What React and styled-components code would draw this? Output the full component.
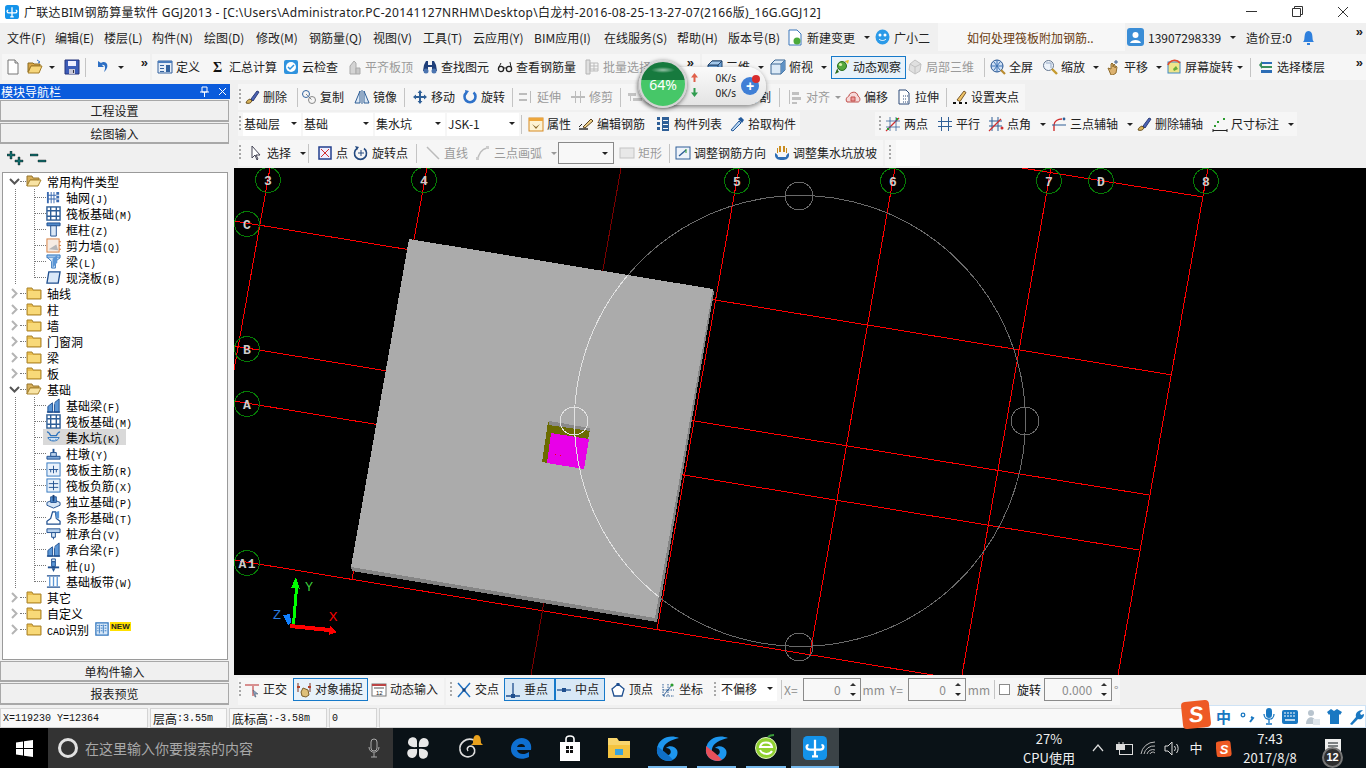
import React from "react";
import styled, { createGlobalStyle } from "styled-components";

const CJK = `"Noto Sans CJK SC", "Noto Sans", sans-serif`;
const MONO = `"Liberation Mono", "Noto Sans CJK SC", monospace`;

const GlobalStyle = createGlobalStyle`
  html, body { margin: 0; padding: 0; background: #f0f0f0; overflow: hidden; }
  * { box-sizing: border-box; }
`;

/* ---------- icons ---------- */
const ICONS = {
  doc: <><path d="M3 1h7l3 3v11H3z" fill="#fff" stroke="#777" /><path d="M10 1v3h3" fill="#ddd" stroke="#777" /></>,
  open: <><path d="M1 4h5l1 1h6v2H4L1 13z" fill="#d8a648" stroke="#8a6a20" /><path d="M4 7h11l-3 7H1z" fill="#f6d67c" stroke="#a37c28" /><path d="M10 1l3 2-2 1" fill="none" stroke="#3b73c4" /></>,
  save: <><path d="M1 1h14v14H1z" fill="#3c5cb8" stroke="#26347a" /><path d="M4 2h8v5H4z" fill="#eef" /><path d="M5 10h6v5H5z" fill="#c8c8d8" /><path d="M9 11h1v3H9z" fill="#334" /></>,
  undo: <path d="M4 2v6h6L8 6c3-1 4 3 2 7 4-3 5-9 0-10-1 0-2 0-3 1z" fill="#2d6fc4" />,
  def: <><path d="M1 2h14v12H1z" fill="#e6eef8" stroke="#34639f" /><path d="M1 2h14v2H1z" fill="#4a7cbc" /><path d="M3 6h4v1H3zM3 9h4v1H3zM3 12h4v1H3zM9 6h4v7H9z" fill="#34639f" /></>,
  sigma: <text x="3" y="13" fontSize="14" fontWeight="700" fill="#111" fontFamily="Liberation Serif">Σ</text>,
  cloud: <><rect x="1" y="1" width="14" height="14" rx="2" fill="#2f93de" /><circle cx="8" cy="8" r="5" fill="#fff" /><path d="M5 8l2 2 4-4" fill="none" stroke="#2f93de" strokeWidth="1.5" /></>,
  flat: <><path d="M4 15V7l4-5 2 2v11z" fill="#d4d4d4" stroke="#aaa" /><path d="M10 9h4v6h-4z" fill="#c8c8c8" stroke="#aaa" /></>,
  binoc: <><path d="M2 6l2-4h2v4h4V2h2l2 4 1 6H10V8H6v4H1z" fill="#1f3f7a" /><circle cx="4" cy="12" r="2.5" fill="#4b74b0" /><circle cx="12" cy="12" r="2.5" fill="#4b74b0" /></>,
  glasses: <><circle cx="4" cy="10" r="2.6" fill="none" stroke="#222" strokeWidth="1.3" /><circle cx="12" cy="10" r="2.6" fill="none" stroke="#222" strokeWidth="1.3" /><path d="M6 9h4M2 8l2-4M14 8l-1-5" stroke="#222" fill="none" /></>,
  batch: <><path d="M2 1h4v14H2z" fill="#e0e0e0" stroke="#b4b4b4" /><path d="M6 4h8v8H6zM6 7h8M6 10h8M10 4v8" fill="none" stroke="#bbb" /></>,
  cube: <><path d="M1 6l4-4h10v9l-4 4H1z" fill="#6ea3d8" stroke="#23466f" /><path d="M1 6h10v9M11 6l4-4" fill="none" stroke="#23466f" /><path d="M1 6l4-4h10l-4 4z" fill="#a4c8ea" stroke="#23466f" /></>,
  topcube: <><path d="M1 5l4-4h10v10l-4 4H1z" fill="#dbe9f6" stroke="#3a6794" /><path d="M1 5h10v10M11 5l4-4" fill="none" stroke="#3a6794" /><path d="M11 5l4-4v10l-4 4z" fill="#5f91c4" /></>,
  orbit: <><path d="M2 14C4 8 9 3 14 2" fill="none" stroke="#777" /><circle cx="8" cy="7" r="4.5" fill="#55a83c" stroke="#2b6d1d" /><circle cx="6.5" cy="5.5" r="1.6" fill="#d8f0a8" /><path d="M11 2l4-1-1 4z" fill="#e7c52d" /><path d="M1 15l2-5 2 3z" fill="#2b6d1d" /></>,
  cubegray: <><path d="M3 5l5-4 6 4-1 7-5 3-6-4z" fill="#e0e0e0" stroke="#c2c2c2" /><path d="M3 5l5 3 6-3M8 8v7" fill="none" stroke="#c2c2c2" /></>,
  globe: <><circle cx="7" cy="7" r="6" fill="#cfe0f4" stroke="#25528e" /><path d="M7 1v12M1 7h12M4 3l6 8M10 3l-6 8" stroke="#3e73b4" fill="none" /><path d="M11 11l4 4" stroke="#b98a2d" strokeWidth="2.2" /></>,
  zoom: <><circle cx="6.5" cy="6.5" r="5" fill="#edf3fa" stroke="#63768f" /><path d="M4 4h5v5" stroke="#93a7c4" fill="none" /><path d="M10 10l5 5" stroke="#c59a2e" strokeWidth="2.4" /></>,
  hand: <><path d="M3 9l3 1V5l1-1 1 1v3l1-3 1 1v3l1-2 1 1-1 6-3 2H6z" fill="#dcb270" stroke="#8f6c2e" /><path d="M11 1v4M9 3h4" stroke="#3f5e8c" /></>,
  rotscreen: <><rect x="2" y="3" width="12" height="11" fill="#efe58b" stroke="#3e88c4" /><path d="M2 6a7 7 0 0 1 12-2" fill="none" stroke="#e24a2d" strokeWidth="1.7" /><path d="M7 10l3-3 2 3-4 2z" fill="#69ad3a" /></>,
  floors: <><path d="M3 3h11v2H3z" fill="#2d6eb6" /><path d="M3 7h11v2H3z" fill="#3a8f5a" /><path d="M3 11h11v3H3z" fill="#2d6eb6" /><path d="M1 6l3-4v8z" fill="#3a8f5a" /></>,

  erase: <><path d="M2 14c1-3 2-3 4-4l2 2c-1 2-3 3-6 2z" fill="#d8b35a" stroke="#6c5425" /><path d="M7 10l6-8 2 1-6 9z" fill="#4b63b5" stroke="#2d3e78" /></>,
  copy: <><circle cx="5" cy="5" r="3.5" fill="none" stroke="#3465a0" /><circle cx="11" cy="11" r="3.5" fill="none" stroke="#888" /><path d="M5 5l6 6" stroke="#555" strokeDasharray="1 1" /></>,
  mirror: <><path d="M1 14L6 2v12zM15 14L10 2v12z" fill="#dde9f5" stroke="#2f5e96" /><path d="M8 1v14" stroke="#2f5e96" /></>,
  move: <path d="M8 1l2.4 3H9v3h3V5.6L15 8l-3 2.4V9H9v3h1.4L8 15l-2.4-3H7V9H4v1.4L1 8l3-2.4V7h3V4H5.6z" fill="#2f5f97" />,
  rotate: <><path d="M11.5 3.5a5.5 5.5 0 1 1-7 0" fill="none" stroke="#2f72c9" strokeWidth="2.6" /><path d="M3 1l4 1-3 4z" fill="#2f72c9" /></>,
  extend: <path d="M1 4h8v2H1zM1 10h8v2H1zM12 2h1v12h-1z" fill="#bcbcbc" />,
  trim: <path d="M1 7h14v2H1zM5 2h1v12H5zM10 2h1v12h-1z" fill="#bcbcbc" />,
  merge: <path d="M1 4h8v3H1zM6 9h9v3H6zM3 7h1v5H3z" fill="#c4c4c4" />,
  alignG: <path d="M2 1h1v14H2zM5 3h7v3H5zM5 8h9v3H5zM5 13h5v2H5z" fill="#c0c0c0" />,
  offset: <><path d="M2 13c-2-3 0-5 2-6 0-4 8-6 9 0 3 2 2 6 0 6z" fill="#f6d8d8" stroke="#c0514d" /><path d="M6 12V8h4v4z" fill="#e99" stroke="#c0514d" /></>,
  stretch: <><path d="M3 1h7l3 3v11H3z" fill="#fff" stroke="#2c4a78" /><path d="M7 7h5M7 10h4M7 13h6" stroke="#2c4a78" strokeDasharray="1 1" /></>,
  grip: <><path d="M5 11l7-9 2 1.5-6 9z" fill="#efc365" stroke="#77572a" /><path d="M1 15h3v-2H1zM7 15h3v-2H7zM13 15h2v-2h-2z" fill="#111" /></>,

  prop: <><rect x="1" y="2" width="14" height="13" fill="#fdf3d4" stroke="#d68a23" /><path d="M1 2h14v3H1z" fill="#eda63c" /><path d="M4 8l4 3 4-3-4 5z" fill="#8a6a2c" /></>,
  editbar: <><path d="M1 13h9" stroke="#222" strokeWidth="1.4" /><path d="M5 11l8-8 2 2-8 7z" fill="#efd089" stroke="#5a4320" /><path d="M1 11l3-3" stroke="#222" /></>,
  list: <path d="M2 1h3v3H2zM2 6h3v3H2zM2 11h3v3H2zM7 1h7v14H7zM8 4h5v1H8zM8 8h5v1H8zM8 12h5v1H8z" fill="#2f5f97" fillRule="evenodd" />,
  picker: <><path d="M2 14l8-9 2 2-8 8z" fill="#b9d5f0" stroke="#235a9c" /><path d="M9 3l3-2 3 3-2 3z" fill="#235a9c" /></>,
  twopts: <><path d="M1 15L14 2" stroke="#d12f2f" strokeWidth="1.3" /><path d="M5 1v14M11 1v14M1 5h14M1 11h14" stroke="#2f5f97" fill="none" opacity=".75" /><path d="M2 12h2v2H2zM11 2h2v2h-2z" fill="#2b9c2f" /></>,
  parallel: <path d="M4 1h1v14H4zM11 1h1v14h-1zM1 5h14v1H1zM1 10h14v1H1z" fill="#2f5f97" />,
  ptangle: <><path d="M4 1v14M10 1v14M1 5h13M1 10h13" stroke="#2f5f97" fill="none" /><path d="M1 15L13 3" stroke="#d12f2f" strokeWidth="1.3" /><circle cx="14" cy="12" r="1.5" fill="#d12f2f" /></>,
  arcaux: <><path d="M3 15V9c0-4 4-6 8-6" fill="none" stroke="#d12f2f" strokeWidth="1.4" /><path d="M1 9h14" stroke="#2f5f97" /><circle cx="13" cy="3" r="1.4" fill="#2f5f97" /></>,
  dim: <><path d="M2 9h2v2H2zM11 2h2v2h-2z" fill="#2b9c2f" /><path d="M1 13v3M15 13v3M1 14.500h14" stroke="#222" fill="none" /><path d="M5 5h2v2H5z" fill="#2b9c2f" /></>,

  pointer: <path d="M4 1v12l3-3 2 5 1-1-2-4h4z" fill="#fff" stroke="#445" />,
  point: <><rect x="2" y="2" width="12" height="12" fill="#eef" stroke="#233f8d" strokeWidth="1.5" /><path d="M4 4l8 8M12 4l-8 8" stroke="#d12f2f" /></>,
  rotpt: <><path d="M11 3.500a6 6 0 1 1-7 0" fill="none" stroke="#244a80" strokeWidth="1.6" /><path d="M2 1l4 1-2 3z" fill="#244a80" /><path d="M8 5v6M5 8h6" stroke="#244a80" /></>,
  lineG: <path d="M2 2l12 12" stroke="#bbb" strokeWidth="1.5" />,
  arcG: <><path d="M3 15c0-6 4-11 9-12" fill="none" stroke="#bbb" strokeWidth="1.5" /><rect x="1" y="12" width="3" height="3" fill="#ccc" /><rect x="11" y="1" width="3" height="3" fill="#ccc" /></>,
  rectG: <rect x="1" y="3" width="14" height="10" fill="#e8e8e8" stroke="#c4c4c4" />,
  rebardir: <><rect x="1" y="2" width="14" height="12" fill="#eef3fa" stroke="#2f5f97" /><path d="M4 11l7-6" stroke="#2f5f97" strokeWidth="1.4" /><path d="M11 4v4" stroke="#2b9c2f" /></>,
  sumpup: <><path d="M5 1h2v6H5zM9 1h2v6H9zM3 3h1v5H3zM12 3h1v5h-1z" fill="#c98c1e" /><path d="M1 8c2 1 3 2 3 4h8c0-2 1-3 3-4v3c-1 3-3 4-7 4s-6-1-7-4z" fill="#2d6eb6" /></>,

  ortho: <><path d="M1 2h14v2H1zM8 4h2v10H8z" fill="#d88f8f" /><path d="M9 8l5 4-3 0 1 3-1 0-1-3z" fill="#8aa6c8" stroke="#456" strokeWidth=".5" /></>,
  snap: <><path d="M2 1v9M14 1v9" stroke="#7a3320" /><path d="M1 4h3v2H1zM12 4h3v2h-3z" fill="#b4402a" /><path d="M5 10l2-4 5 2 1 5-3 2-4-1z" fill="#dfc079" stroke="#7a5e2a" /></>,
  dynin: <><rect x="1" y="2" width="14" height="12" fill="#fff" stroke="#777" /><path d="M1 2h14v2H1z" fill="#b44" /><path d="M3 6h10" stroke="#555" /><text x="5" y="13" fontSize="6" fill="#222" fontFamily="Liberation Sans">12</text></>,
  cross: <><path d="M2 1l12 14M14 1L2 15" stroke="#1f6fbf" strokeWidth="1.5" /><rect x="6.500" y="6.500" width="3" height="3" fill="#17407a" /></>,
  perp: <><path d="M8 1v13M1 14h14" stroke="#1f4f8f" strokeWidth="1.3" /><rect x="6" y="12" width="4" height="4" fill="#1f4f8f" /></>,
  mid: <><path d="M1 8h14" stroke="#1f4f8f" strokeWidth="1.3" /><rect x="6" y="6" width="4" height="4" fill="#1f4f8f" /></>,
  vertex: <><path d="M8 2l6 5-2 7H4L2 7z" fill="#fff" stroke="#1f4f8f" strokeWidth="1.3" /><rect x="6.500" y="1" width="3" height="3" fill="#1f4f8f" /></>,
  coord: <><path d="M3 2v12h11M3 8h11M8 2v12" stroke="#2f5f97" strokeDasharray="1.500 1" fill="none" /><path d="M3 14L12 3" stroke="#2f5f97" /><circle cx="12" cy="3" r="1.600" fill="#2b9c2f" /></>,

  folderOpen: <><path d="M1 3h5l1 2h6v2H4l-3 6z" fill="#d8b05a" stroke="#96742c" /><path d="M4 7h11l-3 6H1z" fill="#f8e3a3" stroke="#a9842f" /></>,
  folder: <><path d="M1 3h5l1 2h8v9H1z" fill="#e9bd4d" stroke="#a9842f" /><path d="M2 6h12v7H2z" fill="#f8d978" /></>,
  grid: <path d="M1 2h2v12H1zM5 2h1v12H5zM8 2h1v12H8zM11 2h3v3h-3zM11 6h3v3h-3zM11 10h3v3h-3zM1 5h10v1H1zM1 9h10v1H1z" fill="#3a6ab0" />,
  raft: <><rect x="1" y="1" width="14" height="14" fill="#fff" stroke="#2f5f97" strokeWidth="1.5" /><path d="M1 5h14M1 11h14M5 1v14M11 1v14" stroke="#2f5f97" strokeWidth="1.5" /></>,
  col: <><path d="M1 1h14v3H1z" fill="#4f89c9" stroke="#1f4f8f" /><path d="M5 4h6v11H5z" fill="#dce9f7" stroke="#1f4f8f" /></>,
  wall: <><rect x="1" y="1" width="13" height="14" fill="#f6ece4" stroke="#d57c3c" /><path d="M3 12l8-5 2 6z" fill="#9aa0a6" opacity=".7" /><path d="M14 4h2M14 8h2M14 12h2" stroke="#d57c3c" /></>,
  beam: <><path d="M1 1h14v3H1z" fill="#9cc2ea" stroke="#2f74bd" /><path d="M2 4l4 4v7h4V8l5-4" fill="#d8e8f8" stroke="#2f74bd" /><path d="M7 5l5-4v8l-5 6z" fill="#5b96d6" /></>,
  slab: <path d="M3 2h12l-2 12H1z" fill="#dbe9f8" stroke="#1f4f8f" strokeWidth="1.4" />,
  beamF: <><path d="M2 15V9l5-4v10zM9 15V5l5-4v14z" fill="#5b96d6" stroke="#1f4f8f" /><path d="M1 15h14" stroke="#1f4f8f" strokeWidth="1.5" /><path d="M7 5l2-2v4z" fill="#fff" /></>,
  sump: <><path d="M1 2c2 0 3 2 4 4h6c1-2 2-4 4-4" fill="none" stroke="#2f74bd" strokeWidth="1.4" /><path d="M2 8c1 5 11 5 12 0z" fill="#d0e3f6" stroke="#2f74bd" /><path d="M4 10h1M7 11h1M10 10h1" stroke="#2f74bd" /></>,
  pier: <><path d="M1 11h14v3H1z" fill="#7ea7d6" stroke="#1f4f8f" /><path d="M5 7h6v4H5z" fill="#bcd3ec" stroke="#1f4f8f" /><path d="M7 3h2v4H7z" fill="#1f4f8f" /></>,
  raftMain: <><rect x="1" y="1" width="14" height="14" fill="#e8f1fb" stroke="#2f74bd" /><path d="M3 8h10M8 4v8M5 11V8M11 11V8" stroke="#1f4f8f" fill="none" /></>,
  raftNeg: <><rect x="1" y="1" width="14" height="14" fill="#e8f1fb" stroke="#2f74bd" /><path d="M3 6h10M3 10h10M8 3v10" stroke="#1f4f8f" fill="none" /></>,
  iso: <><path d="M1 9l7-3 7 3v3l-7 3-7-3z" fill="#d7e6f6" stroke="#1f4f8f" /><path d="M5 3h6v6H5z" fill="#5b96d6" stroke="#1f4f8f" /><path d="M7 1h2v7H7z" fill="#173f75" /></>,
  strip: <><path d="M1 15V12l4-3 2-7h3l1 7 4 3v3z" fill="#fff" stroke="#1f4f8f" strokeWidth="1.3" /><path d="M10 2l4-1v8l-3 0z" fill="#5b96d6" /></>,
  cap: <><path d="M1 3h14v4H1z" fill="#b8d2ee" stroke="#1f4f8f" /><path d="M6 7h4v5H6z" fill="#d8e8f8" stroke="#1f4f8f" /><path d="M7 12h2l-1 3z" fill="#1f4f8f" /></>,
  pile: <><path d="M6 1h4v3H6z" fill="#d8e8f8" stroke="#1f4f8f" /><path d="M6 4h4v5H6z" fill="#5b96d6" stroke="#1f4f8f" /><path d="M2 9h12v2H2z" fill="#1f4f8f" /><path d="M6 11h4l-2 4z" fill="#1f4f8f" /></>,
  band: <><path d="M1 2h14M1 14h14" stroke="#1f4f8f" strokeWidth="1.3" /><path d="M4 3v10M8 3v10M12 3v10" stroke="#5b96d6" strokeWidth="1.4" /></>,
  cadbook: <><rect x="1" y="1" width="14" height="14" fill="#d6e7f8" stroke="#2f74bd" strokeWidth="1.4" /><path d="M5 3v10M9.500 3v10" stroke="#2f74bd" /><path d="M2.500 4h1.500M2.500 7h1.500M2.500 10h1.500M6.500 4h2M6.500 7h2M6.500 10h2M11 4h2M11 7h2M11 10h2" stroke="#2f74bd" /></>,
};

const IconSvg = styled.svg`
  flex: none;
  display: block;
`;
const Ico = ({ n, s = 16 }) => (
  <IconSvg width={s} height={s} viewBox="0 0 16 16">
    {ICONS[n]}
  </IconSvg>
);

/* ---------- top bars ---------- */
const Shell = styled.div`
  position: relative;
  width: 1366px;
  height: 768px;
  display: flex;
  flex-direction: column;
  overflow: hidden;
  background: #f0f0f0;
  color: #111;
  font: 12px ${CJK};
`;
const TitleBar = styled.div`
  height: 23px;
  flex: none;
  display: flex;
  align-items: center;
  padding-left: 5px;
  background: #fff;
  font-size: 12px;
  color: #222;
`;
const TitleText = styled.span`
  margin-left: 5px;
  white-space: nowrap;
  font-family: "Noto Sans", "Noto Sans CJK SC", sans-serif;
  letter-spacing: 0.3px;
`;
const WinButtons = styled.div`
  margin-left: auto;
  display: flex;
`;
const WinBtn = styled.div`
  width: 46px;
  height: 23px;
  display: flex;
  align-items: center;
  justify-content: center;
`;
const MenuBar = styled.div`
  height: 31px;
  flex: none;
  display: flex;
  align-items: center;
  padding: 0 0 3px 7px;
  white-space: nowrap;
  color: #222;
`;
const MenuItem = styled.div`
  width: ${(p) => p.$w}px;
  flex: none;
  display: flex;
  align-items: center;
  gap: ${(p) => p.$gap ?? 4}px;
`;
const NewsBox = styled.div`
  width: 187px;
  height: 28px;
  flex: none;
  margin: 0 2px 0 0;
  padding-left: 29px;
  display: flex;
  align-items: center;
  background: #f7f7f7;
  color: #6b3d12;
`;
const Caret = styled.i`
  flex: none;
  display: block;
  width: 0;
  height: 0;
  margin-left: ${(p) => p.$ml ?? 5}px;
  border-left: 3px solid transparent;
  border-right: 3px solid transparent;
  border-top: 3px solid ${(p) => (p.$muted ? "#999" : "#222")};
`;
const Chevrons = styled.span`
  margin-left: auto;
  margin-right: ${(p) => p.$mr ?? 2}px;
  align-self: flex-start;
  margin-top: 2px;
  font: 700 13px/14px "Liberation Sans", sans-serif;
  color: #222;
`;
const ToolRow = styled.div`
  flex: none;
  height: ${(p) => p.$h}px;
  margin-top: ${(p) => p.$mt ?? 0}px;
  margin-bottom: ${(p) => p.$mb ?? 0}px;
  display: flex;
  white-space: nowrap;
`;
const Group = styled.div`
  flex: none;
  display: flex;
  align-items: center;
  width: ${(p) => p.$w}px;
  margin-left: ${(p) => p.$ml ?? 0}px;
  padding-left: ${(p) => p.$pl ?? 0}px;
  padding-bottom: ${(p) => p.$pb ?? 0}px;
  background: #f6f6f6;
`;
const Handle = styled.span`
  flex: none;
  align-self: stretch;
  width: ${(p) => p.$w ?? 6}px;
  background: repeating-linear-gradient(#a8a8a8 0 2px, transparent 2px 4px)
    ${(p) => p.$x ?? 1}px center / 2px 16px no-repeat;
`;
const Sep = styled.span`
  flex: none;
  width: ${(p) => p.$w}px;
  height: 19px;
  background: linear-gradient(#c4c4c4, #c4c4c4) left center / 1px 100% no-repeat;
`;
const ToolItem = styled.div`
  flex: none;
  width: ${(p) => p.$w}px;
  height: ${(p) => (p.$active ? "23px" : "auto")};
  display: flex;
  align-items: center;
  gap: 3px;
  padding-left: ${(p) => p.$pad ?? 0}px;
  color: ${(p) => (p.$muted ? "#9a9a9a" : "#222")};
  ${(p) =>
    p.$active &&
    `border: 1px solid #1679c9; background: ${p.$active === "strong" ? "#d8e8f6" : "#e8f2fa"}; padding-left: ${(p.$pad ?? 3) - 1}px;`}
`;
const ToolLabel = styled.span`
  margin-bottom: 2px;
`;
const Tool = ({ item }) => {
  if (item.sep) return <Sep $w={item.sep} />;
  return (
    <ToolItem $w={item.w} $pad={item.pad} $muted={item.muted} $active={item.active}>
      {item.i && <Ico n={item.i} />}
      {item.t && <ToolLabel>{item.t}</ToolLabel>}
      {item.caret && <Caret $muted={item.muted} $ml={item.ml} />}
    </ToolItem>
  );
};
const Tools = ({ list }) => list.map((item, k) => <Tool key={k} item={item} />);

const SelectBox = styled.div`
  flex: none;
  width: ${(p) => p.$w}px;
  height: 23px;
  margin-right: ${(p) => p.$mr ?? 2}px;
  padding: 0 4px 2px 1px;
  display: flex;
  align-items: center;
  justify-content: space-between;
  background: #fff;
  color: #222;
`;
const ComboBox = styled.div`
  flex: none;
  width: 56px;
  height: 22px;
  margin-right: 5px;
  padding-right: 5px;
  display: flex;
  align-items: center;
  justify-content: flex-end;
  background: #f8f8f8;
  border: 1px solid #8a8a8a;
`;
const BlankTab = styled.div`
  flex: none;
  width: 24px;
  height: 26px;
  margin-left: 4px;
  background: #fbfbfb;
`;

/* ---------- floating speed widget ---------- */
const Widget = styled.div`
  position: absolute;
  left: 638px;
  top: 67px;
  width: 128px;
  height: 38px;
  border-radius: 19px;
  background: linear-gradient(#fafafa, #e4e4e4);
  box-shadow: 0 2px 5px rgba(0, 0, 0, 0.45);
`;
const Ball = styled.div`
  position: absolute;
  left: 1px;
  top: -7px;
  width: 48px;
  height: 48px;
  border-radius: 50%;
  display: flex;
  align-items: center;
  justify-content: center;
  border: 2px solid #d4d4d4;
  background: radial-gradient(ellipse 12px 3px at 50% 8px, rgba(255, 255, 255, 0.55), transparent),
    linear-gradient(#177a3e 0 42%, #46c768 42% 100%);
  box-shadow: 0 1px 4px rgba(0, 0, 0, 0.55);
  color: #fff;
  font: 14px "Noto Sans", sans-serif;
`;
const Speed = styled.div`
  position: absolute;
  right: 30px;
  top: ${(p) => p.$top}px;
  font: 10px/12px "Noto Sans", sans-serif;
  color: #222;
`;
const SpeedArrow = styled.svg`
  position: absolute;
  left: 53px;
  top: ${(p) => p.$top}px;
`;
const PlusDot = styled.div`
  position: absolute;
  left: 103px;
  top: 10px;
  width: 18px;
  height: 18px;
  border-radius: 50%;
  background: #3f7fd6;
  color: #fff;
  font: 700 14px/18px "Liberation Sans", sans-serif;
  text-align: center;
`;
const RedDot = styled.div`
  position: absolute;
  left: 114px;
  top: 8px;
  width: 8px;
  height: 8px;
  border-radius: 50%;
  background: #d92c2c;
`;

/* ---------- left panel ---------- */
const Main = styled.div`
  flex: none;
  height: 626px;
  display: flex;
`;
const Sidebar = styled.div`
  flex: none;
  width: 234px;
  padding-top: 2px;
  display: flex;
  flex-direction: column;
`;
const PanelHead = styled.div`
  width: 230px;
  height: 15px;
  flex: none;
  display: flex;
  align-items: center;
  padding: 0 3px 0 1px;
  background: #0a5bdc;
  color: #fff;
`;
const PanelBtn = styled.div`
  width: 229px;
  height: ${(p) => p.$h}px;
  flex: none;
  margin-top: 1px;
  display: flex;
  align-items: center;
  justify-content: center;
  background: #f0f0f0;
  border: 1px solid #a8a8a8;
  border-bottom-width: 2px;
  color: #222;
`;
const ExpandStrip = styled.div`
  width: 229px;
  height: 28px;
  flex: none;
  display: flex;
  align-items: center;
  gap: 6px;
  padding-left: 7px;
`;
const TreeBox = styled.div`
  width: 226px;
  height: 488px;
  flex: none;
  margin-left: 2px;
  background: #fff;
  border: 1px solid #9a9a9a;
  font-size: 12px;
  color: #000;
`;
const dots = "repeating-linear-gradient(#777 0 1px, transparent 1px 2px)";
const TreeRow = styled.div`
  height: 16px;
  display: flex;
  align-items: center;
  white-space: nowrap;
  padding-left: ${(p) => (p.$child ? 31 : 6)}px;
  ${(p) =>
    p.$child &&
    `background: ${dots} 12px 0 / 1px 100% no-repeat, ${dots} 31px 0 / 1px ${p.$last ? "9px" : "100%"} no-repeat;`}
`;
const Twist = styled.svg`
  flex: none;
  width: 11px;
  height: 11px;
`;
const Dotted = styled.span`
  flex: none;
  width: ${(p) => p.$w}px;
  height: 0;
  border-top: 1px dotted #777;
`;
const Folder = styled.span`
  flex: none;
  margin-right: 5px;
`;
const CadMark = styled.span`
  flex: none;
  margin-left: 6px;
`;
const Leaf = styled.span`
  display: flex;
  align-items: center;
  gap: 5px;
  height: 16px;
  ${(p) => p.$sel && "margin-left: -3px; padding: 0 6px 0 3px; background: #d9d9d9;"}
`;
const Hot = styled.span`
  font: 10px ${MONO};
`;
const NewTag = styled.span`
  margin: -6px 0 0 1px;
  padding: 0 1px;
  background: #ffe000;
  font: 700 8px/9px "Liberation Sans", sans-serif;
  color: #222;
`;

const ROOT_A = ["轴线", "柱", "墙", "门窗洞", "梁", "板"];
const COMMON = [
  ["grid", "轴网", "(J)"], ["raft", "筏板基础", "(M)"], ["col", "框柱", "(Z)"],
  ["wall", "剪力墙", "(Q)"], ["beam", "梁", "(L)"], ["slab", "现浇板", "(B)"],
];
const BASE = [
  ["beamF", "基础梁", "(F)"], ["raft", "筏板基础", "(M)"], ["sump", "集水坑", "(K)", true],
  ["pier", "柱墩", "(Y)"], ["raftMain", "筏板主筋", "(R)"], ["raftNeg", "筏板负筋", "(X)"],
  ["iso", "独立基础", "(P)"], ["strip", "条形基础", "(T)"], ["cap", "桩承台", "(V)"],
  ["beamF", "承台梁", "(F)"], ["pile", "桩", "(U)"], ["band", "基础板带", "(W)"],
];

const Node = ({ open, label, children }) => (
  <TreeRow>
    <Twist viewBox="0 0 11 11">
      {open ? (
        <path d="M1 3l4.500 4.500L10 3" fill="none" stroke="#555" strokeWidth="2" />
      ) : (
        <path d="M3 1l4.500 4.500L3 10" fill="none" stroke="#b4b4b4" strokeWidth="2" />
      )}
    </Twist>
    <Dotted $w={6} />
    <Folder>
      <Ico n={open ? "folderOpen" : "folder"} />
    </Folder>
    <span>{label}</span>
    {children}
  </TreeRow>
);
const Leaves = ({ list }) =>
  list.map(([icon, name, key, sel], k) => (
    <TreeRow key={name + k} $child $last={k === list.length - 1}>
      <Dotted $w={12} />
      <Leaf $sel={sel}>
        <Ico n={icon} s={15} />
        <span>
          {name}
          <Hot>{key}</Hot>
        </span>
      </Leaf>
    </TreeRow>
  ));

/* ---------- drawing area ---------- */
const Workspace = styled.div`
  flex: none;
  width: 1132px;
  padding-top: 2px;
  display: flex;
  flex-direction: column;
`;
const CanvasWrap = styled.div`
  flex: none;
  height: 507px;
  margin-top: 2px;
  background: #000;
`;
const CanvasSvg = styled.svg`
  display: block;
  shape-rendering: crispEdges;
`;
const RED_LINES = [
  [270, 168, 234, 370], [427, 168, 352, 580], [739, 168, 657, 630], [895, 168, 810, 654],
  [1051, 168, 962, 675], [1208, 168, 1118, 675], [1022, 168, 1203, 197],
  [234, 221, 1172, 375], [234, 346, 1149, 495], [234, 401, 1139, 550], [234, 560, 933, 675],
];
const BUBBLES = [
  ["3", 268, 180], ["4", 424, 180], ["5", 737, 181], ["6", 893, 181], ["7", 1049, 181],
  ["D", 1101, 181], ["8", 1206, 181], ["C", 247, 224], ["B", 247, 349], ["A", 247, 404], ["A1", 247, 563],
];
const SMALL = [[799, 196], [1025, 421], [799, 647]];
const PLATE = "409,239 713,289 655,618 351,567";

const Drawing = () => (
  <CanvasSvg width="1132" height="507" viewBox="234 168 1132 507">
    {RED_LINES.map(([a, b, c, d], k) => (
      <line key={k} x1={a} y1={b} x2={c} y2={d} stroke="#ff0000" />
    ))}
    <line x1="621" y1="168" x2="531" y2="675" stroke="#7a0000" />
    <polygon points="713,289 714,292 657,622 352,571 351,567 655,618" fill="#858585" />
    <polygon points={PLATE} fill="#ababab" />
    <polygon points="548,422 590,429 583,468 542,462" fill="#6b6b00" />
    <polygon points="549,421 590,428 590,431 549,425" fill="#8a8a8a" />
    <polygon points="551,433 589,439 584,469 547,463" fill="#e800e8" />
    <rect x="555" y="454" width="1" height="1" fill="#ff0000" />
    <rect x="560" y="455" width="1" height="1" fill="#ff0000" />
    <g fill="none" stroke="#6a6a6a">
      <path d="M628 275A225.500 225.500 0 1 1 659 597" />
      {SMALL.map(([x, y]) => (
        <circle key={x + "-" + y} cx={x} cy={y} r="14" />
      ))}
    </g>
    <g fill="none" stroke="#e2e2e2">
      <path d="M628 275A225.500 225.500 0 0 0 659 597" />
      <circle cx="574" cy="421" r="14" />
    </g>
    {BUBBLES.map(([t, x, y]) => (
      <g key={t}>
        <circle cx={x} cy={y} r="12.500" fill="none" stroke="#067a06" />
        <text x={x} y={y + 5} textAnchor="middle" fontSize="13" fontWeight="700" fill="#cccccc" fontFamily="Liberation Mono" textLength={t.length > 1 ? 17 : undefined}>
          {t}
        </text>
      </g>
    ))}
    <polygon points="292,624 295,588 291,588 296,577 300,589 298,588 295,624" fill="#00ff00" />
    <polygon points="290,624 330,628 330,626 337,632 329,635 329,632 290,628" fill="#ff0000" />
    <polygon points="283,615 290,614 291,622 288,625" fill="#1080ff" />
    <text x="309" y="591" textAnchor="middle" fontSize="12" fill="#3fd63f" fontFamily="Liberation Sans">Y</text>
    <text x="333" y="621" textAnchor="middle" fontSize="13" fill="#ff0000" fontFamily="Liberation Sans">X</text>
    <text x="277" y="619" textAnchor="middle" fontSize="13" fill="#2a7be0" fontFamily="Liberation Sans">Z</text>
  </CanvasSvg>
);

const MutedText = styled.span`
  flex: none;
  color: #8c8c8c;
  margin: ${(p) => p.$m ?? "0"};
`;
const SpinField = styled.div`
  flex: none;
  width: ${(p) => p.$w}px;
  height: 23px;
  margin-left: ${(p) => p.$ml ?? 0}px;
  display: flex;
  align-items: center;
  justify-content: flex-end;
  gap: 9px;
  padding-right: 4px;
  background: #f8f8f8;
  border: 1px solid #8a8a8a;
  color: #8c8c8c;
`;
const SpinArrows = styled.span`
  flex: none;
  display: flex;
  flex-direction: column;
  gap: 7px;
`;
const UpCaret = styled(Caret)`
  margin: 0;
  border-top: 0;
  border-bottom: 3px solid #333;
`;
const Spin = ({ w, v, ml }) => (
  <SpinField $w={w} $ml={ml}>
    {v}
    <SpinArrows>
      <UpCaret />
      <Caret $ml={0} />
    </SpinArrows>
  </SpinField>
);
const CheckBox = styled.span`
  flex: none;
  width: 11px;
  height: 11px;
  margin: 0 7px 0 4px;
  background: #fff;
  border: 1px solid #8a8a8a;
`;

/* ---------- status + task bar ---------- */
const StatusBar = styled.div`
  flex: none;
  height: 20px;
  display: flex;
  gap: 2px;
  font: 10px ${MONO};
  color: #111;
`;
const Cell = styled.div`
  flex: ${(p) => (p.$w ? `0 0 ${p.$w}px` : "1 1 auto")};
  display: flex;
  align-items: center;
  gap: 0;
  padding-left: 2px;
  white-space: nowrap;
  background: #f8f8f8;
  border: 1px solid #d4d4d4;
`;
const CellHan = styled.span`
  font: 12px ${CJK};
`;
const ImeTab = styled.div`
  position: absolute;
  left: 1182px;
  top: 701px;
  width: 28px;
  height: 27px;
  z-index: 2;
  display: flex;
  align-items: center;
  justify-content: center;
  border-radius: 4px;
  transform: rotate(-6deg);
  background: #ee5a24;
  color: #fff;
  font: italic 700 22px/1 "Liberation Sans", sans-serif;
`;
const ImeBar = styled.div`
  position: absolute;
  left: 1205px;
  top: 705px;
  width: 161px;
  height: 23px;
  display: flex;
  align-items: center;
  padding-left: 10px;
  gap: 7px;
  background: #fff;
  border: 1px solid #cfe3f5;
  color: #1a78c2;
`;
const ImeHan = styled.span`
  font: 700 15px ${CJK};
`;
const Taskbar = styled.div`
  flex: none;
  height: 40px;
  display: flex;
  background: #0a1217;
  color: #fff;
`;
const StartBtn = styled.div`
  flex: none;
  width: 48px;
  display: flex;
  align-items: center;
  justify-content: center;
  background: #000;
`;
const SearchBox = styled.div`
  flex: none;
  width: 345px;
  display: flex;
  align-items: center;
  padding-left: 10px;
  background: #333;
  color: #a8a8a8;
  font-size: 14px;
`;
const CortanaRing = styled.span`
  flex: none;
  width: 20px;
  height: 20px;
  margin-right: 7px;
  border: 3px solid #e0e0e0;
  border-radius: 50%;
`;
const MicSvg = styled.svg`
  margin-left: auto;
  margin-right: 13px;
`;
const TaskSlot = styled.div`
  position: relative;
  flex: none;
  width: ${(p) => p.$w}px;
  display: flex;
  align-items: center;
  justify-content: center;
  ${(p) => p.$current && "background: #3b4347;"}
  ${(p) =>
    p.$open &&
    `&::after { content: ""; position: absolute; left: ${p.$current ? 0 : 5}px; right: ${p.$current ? 0 : 5}px; bottom: 0; height: 2px; background: #76b9ed; }`}
`;
const Tray = styled.div`
  margin-left: auto;
  display: flex;
`;
const TraySlot = styled.div`
  flex: none;
  width: ${(p) => p.$w}px;
  display: flex;
  flex-direction: column;
  align-items: center;
  justify-content: center;
  gap: 1px;
  font: 13px/18px ${CJK};
  color: #f0f0f0;
`;
const Badge = styled.span`
  position: absolute;
  left: 22px;
  top: 19px;
  width: 21px;
  height: 21px;
  border-radius: 50%;
  background: #2e2e2e;
  border: 2px solid #777;
  font: 700 11px/17px "Liberation Sans", sans-serif;
  text-align: center;
`;
const NotifySlot = styled.div`
  position: relative;
  flex: none;
  width: 66px;
`;
const NotifyIcon = styled.svg`
  position: absolute;
  left: 25px;
  top: 11px;
`;
const PinSvg = styled.svg`
  margin-left: auto;
`;
const CloseSvg = styled.svg`
  margin-left: 9px;
`;

/* ---------- tool data ---------- */
const ROW1_A = [
  { i: "doc", w: 22 }, { i: "open", w: 37, caret: 1, ml: 3 }, { i: "save", w: 21 }, { sep: 9 },
  { i: "undo", w: 46, caret: 1 },
];
const ROW1_B = [
  { i: "def", t: "定义", w: 53 }, { i: "sigma", t: "汇总计算", w: 73 }, { i: "cloud", t: "云检查", w: 63 },
  { i: "flat", t: "平齐板顶", w: 76, muted: 1 }, { i: "binoc", t: "查找图元", w: 75 },
  { i: "glasses", t: "查看钢筋量", w: 87 }, { i: "batch", t: "批量选择", w: 76, muted: 1 },
];
const ROW1_C = [
  { i: "cube", t: "三维", w: 63, caret: 1 }, { i: "topcube", t: "俯视", w: 61, caret: 1 },
  { i: "orbit", t: "动态观察", w: 75, active: 1, pad: 3 }, { i: "cubegray", t: "局部三维", w: 78, pad: 1, muted: 1 },
  { sep: 6 }, { i: "globe", t: "全屏", w: 52 }, { i: "zoom", t: "缩放", w: 63, caret: 1 },
  { i: "hand", t: "平移", w: 61, caret: 1 }, { i: "rotscreen", t: "屏幕旋转", w: 84, caret: 1, ml: 1 },
  { sep: 8 }, { i: "floors", t: "选择楼层", w: 90 },
];
const ROW2 = [
  { i: "erase", t: "删除", w: 53 }, { sep: 4 }, { i: "copy", t: "复制", w: 53 }, { i: "mirror", t: "镜像", w: 50 },
  { sep: 8 }, { i: "move", t: "移动", w: 50 }, { i: "rotate", t: "旋转", w: 50 }, { sep: 6 },
  { i: "extend", t: "延伸", w: 52, muted: 1 }, { i: "trim", t: "修剪", w: 50, muted: 1 }, { sep: 7 },
  { i: "merge", t: "合并", w: 50, muted: 1 }, { i: "merge", t: "打断", w: 51 }, { i: "trim", t: "分割", w: 51 },
  { sep: 8 }, { i: "alignG", t: "对齐", w: 58, caret: 1, muted: 1, ml: 2 }, { i: "offset", t: "偏移", w: 51 },
  { i: "stretch", t: "拉伸", w: 50 }, { sep: 6 }, { i: "grip", t: "设置夹点", w: 73 },
];
const ROW3_A = [
  { i: "prop", t: "属性", w: 50 }, { i: "editbar", t: "编辑钢筋", w: 77 }, { i: "list", t: "构件列表", w: 74 },
  { i: "picker", t: "拾取构件", w: 71 },
];
const ROW3_B = [
  { i: "twopts", t: "两点", w: 52 }, { i: "parallel", t: "平行", w: 51 }, { i: "ptangle", t: "点角", w: 63, caret: 1, ml: 6 },
  { i: "arcaux", t: "三点辅轴", w: 85, caret: 1, ml: 6 }, { i: "erase", t: "删除辅轴", w: 76 },
  { i: "dim", t: "尺寸标注", w: 85, caret: 1, ml: 6 },
];
const ROW4_A = [
  { i: "pointer", t: "选择", w: 60, caret: 1, ml: 6 }, { sep: 9 }, { i: "point", t: "点", w: 36 }, { i: "rotpt", t: "旋转点", w: 63 },
  { sep: 9 }, { i: "lineG", t: "直线", w: 50, muted: 1 }, { i: "arcG", t: "三点画弧", w: 83, caret: 1, muted: 1, ml: 6 },
];
const ROW4_B = [
  { i: "rectG", t: "矩形", w: 50, muted: 1 }, { sep: 6 }, { i: "rebardir", t: "调整钢筋方向", w: 99 },
  { i: "sumpup", t: "调整集水坑放坡", w: 109 },
];
const SNAP_A = [
  { i: "ortho", t: "正交", w: 49 }, { i: "snap", t: "对象捕捉", w: 75, active: 1, pad: 3 }, { i: "dynin", t: "动态输入", w: 73, pad: 3 },
];
const SNAP_B = [
  { i: "cross", t: "交点", w: 48 }, { i: "perp", t: "垂点", w: 51, active: "strong", pad: 1 }, { i: "mid", t: "中点", w: 50, active: "strong", pad: 1 },
  { i: "vertex", t: "顶点", w: 55, pad: 5 }, { i: "coord", t: "坐标", w: 51 },
];
const MENUS = [
  ["文件(F)", 48], ["编辑(E)", 49], ["楼层(L)", 48], ["构件(N)", 52], ["绘图(D)", 52], ["修改(M)", 53],
  ["钢筋量(Q)", 64], ["视图(V)", 50], ["工具(T)", 50], ["云应用(Y)", 61], ["BIM应用(I)", 70], ["在线服务(S)", 73],
  ["帮助(H)", 51], ["版本号(B)", 60],
];

const AppLogo = ({ s = 14 }) => (
  <svg width={s} height={s} viewBox="0 0 16 16">
    <rect width="16" height="16" rx="3" fill="#1493ea" />
    <path d="M8 2.500v11M8 9H4.500c-2.500 0-2.800-3-.8-3M8 9h3.500c2.500 0 2.800-3 .8-3M6 13.500h4" fill="none" stroke="#fff" strokeWidth="1.500" />
  </svg>
);
const SwooshG = ({ red }) => (
  <svg width="26" height="27" viewBox="0 0 26 27">
    <path d="M24 3C15-1 3 3 2 14c-1 7 5 12 12 12 6-1 10-6 8-11-2-4-8-5-11-2 4 0 6 3 4 6-3 3-8 0-7-5 1-6 8-9 16-11z" fill="#1d96ee" />
    <path d="M2 14c-1 7 5 12 12 12 2 0 3-1 4-1-3-4-8-8-16-14z" fill={red ? "#e8505a" : "#0f6fc8"} />
  </svg>
);

export default function App() {
  return (
    <Shell>
      <GlobalStyle />
      <TitleBar>
        <AppLogo />
        <TitleText>广联达BIM钢筋算量软件 GGJ2013 - [C:\Users\Administrator.PC-20141127NRHM\Desktop\白龙村-2016-08-25-13-27-07(2166版)_16G.GGJ12]</TitleText>
        <WinButtons>
          <WinBtn>
            <svg width="11" height="11"><path d="M0 5.500h11" stroke="#333" /></svg>
          </WinBtn>
          <WinBtn>
            <svg width="11" height="11"><path d="M.5 2.500h8v8h-8zM2.500 2.500v-2h8v8h-2" fill="none" stroke="#333" /></svg>
          </WinBtn>
          <WinBtn>
            <svg width="12" height="12"><path d="M1 1l10 10M11 1L1 11" stroke="#333" /></svg>
          </WinBtn>
        </WinButtons>
      </TitleBar>

      <MenuBar>
        {MENUS.map(([t, w]) => (
          <MenuItem key={t} $w={w}>{t}</MenuItem>
        ))}
        <MenuItem $w={87} $gap={5}>
          <svg width="14" height="17" viewBox="0 0 14 17">
            <path d="M1 1h8l4 4v11H1z" fill="#fff" stroke="#3a77bb" />
            <circle cx="9" cy="12" r="3.500" fill="#4caa3a" />
          </svg>
          新建变更
          <Caret $ml={4} />
        </MenuItem>
        <MenuItem $w={63} $gap={4}>
          <svg width="15" height="16" viewBox="0 0 15 16">
            <ellipse cx="7.500" cy="8" rx="7" ry="7.500" fill="#2b9ae8" />
            <circle cx="5" cy="6" r="1.500" fill="#fff" />
            <circle cx="10" cy="6" r="1.500" fill="#fff" />
            <path d="M4 10c2 2 5 2 7 0" fill="none" stroke="#fff" />
          </svg>
          广小二
        </MenuItem>
        <NewsBox>如何处理筏板附加钢筋..</NewsBox>
        <MenuItem $w={119} $gap={4}>
          <svg width="17" height="18" viewBox="0 0 17 18">
            <rect width="17" height="18" rx="3" fill="#3a8dd6" />
            <circle cx="8.500" cy="7" r="3" fill="#fff" />
            <path d="M3 15c1-4 10-4 11 0z" fill="#fff" />
          </svg>
          13907298339
          <Caret $ml={5} />
        </MenuItem>
        <MenuItem $w={56}>造价豆:0</MenuItem>
        <svg width="13" height="17" viewBox="0 0 13 17">
          <path d="M1 13c2-2 1-4 2-8 1-4 6-4 7 0 1 4 0 6 2 8z" fill="#2f80dd" />
          <rect x="5" y="14" width="3" height="2" fill="#2f80dd" />
        </svg>
        <Chevrons $mr={3}>»</Chevrons>
      </MenuBar>

      <ToolRow $h={26} $mb={2}>
        <Group $w={148} $ml={2} $pl={3}>
          <Tools list={ROW1_A} />
          <Chevrons>»</Chevrons>
        </Group>
        <Group $w={548} $ml={2} $pl={5}>
          <Tools list={ROW1_B} />
          <Chevrons $mr={6}>»</Chevrons>
        </Group>
        <Group $w={664} $ml={2} $pl={5}>
          <Tools list={ROW1_C} />
          <Chevrons $mr={3}>»</Chevrons>
        </Group>
      </ToolRow>

      <Main>
        <Sidebar>
          <PanelHead>
            模块导航栏
            <PinSvg width="9" height="11" viewBox="0 0 9 11">
              <path d="M2 1h5v5H2zM0 6h9M4.500 6v5" fill="none" stroke="#fff" />
            </PinSvg>
            <CloseSvg width="9" height="9" viewBox="0 0 9 9">
              <path d="M1 1l7 7M8 1L1 8" stroke="#fff" />
            </CloseSvg>
          </PanelHead>
          <PanelBtn $h={22}>工程设置</PanelBtn>
          <PanelBtn $h={21}>绘图输入</PanelBtn>
          <ExpandStrip>
            <svg width="17" height="15" viewBox="0 0 17 15">
              <path d="M3 0h2v3h3v2H5v3H3V5H0V3h3zM11 6h2v3h3v2h-3v3h-2v-3H8V9h3z" fill="#0f6d6d" stroke="#111" strokeWidth=".4" />
            </svg>
            <svg width="17" height="15" viewBox="0 0 17 15">
              <path d="M0 3h8v2H0zM8 9h8v2H8z" fill="#0f6d6d" stroke="#111" strokeWidth=".4" />
            </svg>
          </ExpandStrip>
          <TreeBox>
            <Node open label="常用构件类型" />
            <Leaves list={COMMON} />
            {ROOT_A.map((t) => (
              <Node key={t} label={t} />
            ))}
            <Node open label="基础" />
            <Leaves list={BASE} />
            <Node label="其它" />
            <Node label="自定义" />
            <Node
              label={
                <>
                  <Hot>CAD</Hot>识别
                </>
              }
            >
              <CadMark>
                <Ico n="cadbook" s={14} />
              </CadMark>
              <NewTag>NEW</NewTag>
            </Node>
          </TreeBox>
          <PanelBtn $h={21}>单构件输入</PanelBtn>
          <PanelBtn $h={22}>报表预览</PanelBtn>
        </Sidebar>

        <Workspace>
          <ToolRow $h={26}>
            <Group $w={787} $ml={4}>
              <Handle $w={6} />
              <Tools list={ROW2} />
            </Group>
          </ToolRow>
          <ToolRow $h={24} $mt={2}>
            <Group $w={562} $ml={4}>
              <Handle $w={5} />
              <SelectBox $w={58}>基础层<Caret $ml={0} /></SelectBox>
              <SelectBox $w={70}>基础<Caret $ml={0} /></SelectBox>
              <SelectBox $w={70}>集水坑<Caret $ml={0} /></SelectBox>
              <SelectBox $w={72}>JSK-1<Caret $ml={0} /></SelectBox>
              <Sep $w={7} />
              <Tools list={ROW3_A} />
            </Group>
            <Group $w={422} $ml={75}>
              <Handle $w={10} $x={4} />
              <Tools list={ROW3_B} />
            </Group>
          </ToolRow>
          <ToolRow $h={26} $mt={4}>
            <Group $w={645} $ml={4}>
              <Handle $w={10} />
              <Tools list={ROW4_A} />
              <ComboBox><Caret $ml={0} /></ComboBox>
              <Tools list={ROW4_B} />
            </Group>
            <Group $w={33} $ml={2} $pl={3}>
              <Handle $w={4} />
              <BlankTab />
            </Group>
          </ToolRow>
          <CanvasWrap>
            <Drawing />
          </CanvasWrap>
          <ToolRow $h={27} $mt={3}>
            <Group $w={206} $ml={4} $pb={4}>
              <Handle />
              <Tools list={SNAP_A} />
            </Group>
            <Group $w={265} $ml={2} $pb={4}>
              <Handle $w={10} $x={4} />
              <Tools list={SNAP_B} />
            </Group>
            <Group $w={409} $pb={4}>
              <Handle $w={9} $x={3} />
              <SelectBox $w={57} $mr={4}>不偏移<Caret $ml={0} /></SelectBox>
              <Sep $w={3} />
              <MutedText $m="0 5px 0 0">X=</MutedText>
              <Spin w={58} v="0" />
              <MutedText $m="0 5px 0 2px">mm</MutedText>
              <MutedText $m="0 5px 0 0">Y=</MutedText>
              <Spin w={58} v="0" />
              <MutedText $m="0 4px 0 2px">mm</MutedText>
              <Sep $w={1} />
              <CheckBox />
              <span>旋转</span>
              <Spin w={68} v="0.000" ml={3} />
              <MutedText $m="0 0 0 2px">°</MutedText>
            </Group>
          </ToolRow>
        </Workspace>
      </Main>

      <StatusBar>
        <Cell $w={148}>X=119230 Y=12364</Cell>
        <Cell $w={77}><CellHan>层高</CellHan>:3.55m</Cell>
        <Cell $w={98}><CellHan>底标高</CellHan>:-3.58m</Cell>
        <Cell $w={48}>0</Cell>
        <Cell />
      </StatusBar>

      <ImeTab>S</ImeTab>
      <ImeBar>
        <ImeHan>中</ImeHan>
        <svg width="18" height="16" viewBox="0 0 18 16">
          <circle cx="5" cy="6" r="1.800" fill="none" stroke="#1a78c2" strokeWidth="1.300" />
          <path d="M13 8l2 1-3 4" fill="none" stroke="#1a78c2" strokeWidth="2" />
        </svg>
        <svg width="12" height="17" viewBox="0 0 12 17">
          <rect x="3" y="0" width="6" height="10" rx="3" fill="#1a78c2" />
          <path d="M1 6c0 7 10 7 10 0M6 12v3M3 16h6" fill="none" stroke="#1a78c2" strokeWidth="1.300" />
        </svg>
        <svg width="16" height="14" viewBox="0 0 16 14">
          <rect width="16" height="14" rx="2" fill="#1a78c2" />
          <path d="M2 3h12M2 6h12" stroke="#fff" strokeDasharray="2 1" />
          <path d="M3 10h10" stroke="#fff" strokeWidth="1.400" />
        </svg>
        <svg width="15" height="16" viewBox="0 0 15 16">
          <circle cx="6" cy="4" r="3" fill="#b8c4ce" />
          <path d="M1 15c0-9 10-9 10 0z" fill="#b8c4ce" />
          <rect x="8" y="10" width="7" height="6" fill="#dfe6ec" />
        </svg>
        <svg width="15" height="15" viewBox="0 0 15 15">
          <path d="M4 0l3 2 3-2 5 3-2 3-1-1v10H3V5L2 6 0 3z" fill="#1a78c2" />
        </svg>
        <svg width="15" height="16" viewBox="0 0 15 16">
          <path d="M1 15l6-7c-1-4 2-7 7-7l-3 3 1 2 3-1c0 4-3 6-6 5l-6 6z" fill="#1a78c2" />
        </svg>
      </ImeBar>

      <Widget>
        <Ball>64%</Ball>
        <SpeedArrow $top={6} width="7" height="9" viewBox="0 0 7 9">
          <path d="M3.500 0L7 4.500H4.500V9h-2V4.500H0z" fill="#e0604a" />
        </SpeedArrow>
        <SpeedArrow $top={21} width="7" height="9" viewBox="0 0 7 9">
          <path d="M3.500 9L7 4.500H4.500V0h-2v4.500H0z" fill="#2f9c4f" />
        </SpeedArrow>
        <Speed $top={5}>0K/s</Speed>
        <Speed $top={20}>0K/s</Speed>
        <PlusDot>+</PlusDot>
        <RedDot />
      </Widget>

      <Taskbar>
        <StartBtn>
          <svg width="17" height="17" viewBox="0 0 17 17">
            <path d="M0 2.500l7-1v6.500H0zM8 1.300L17 0v8H8zM0 9h7v6.500l-7-1zM8 9h9v8l-9-1.300z" fill="#fff" />
          </svg>
        </StartBtn>
        <SearchBox>
          <CortanaRing />
          在这里输入你要搜索的内容
          <MicSvg width="12" height="20" viewBox="0 0 12 20">
            <rect x="3" y="1" width="6" height="12" rx="3" fill="none" stroke="#aaa" />
            <path d="M1 9c0 7 10 7 10 0M6 15v4M3 19h6" fill="none" stroke="#aaa" />
          </MicSvg>
        </SearchBox>
        <TaskSlot $w={50}>
          <svg width="24" height="24" viewBox="0 0 24 24" fill="#e8e8e8">
            <path d="M11 11C4 12 0 8 3 3c3-3 8-2 8 2zM13 11c-1-7 3-11 8-8 3 3 2 8-2 8zM13 13c7-1 11 3 8 8-3 3-8 2-8-2zM11 13c1 7-3 11-8 8-3-3-2-8 2-8z" />
          </svg>
        </TaskSlot>
        <TaskSlot $w={53}>
          <svg width="32" height="32" viewBox="0 0 32 32">
            <path d="M20 8C12 5 5 11 6 18c1 6 8 9 13 5 3-3 2-8-2-9-3 0-5 3-3 5" fill="none" stroke="#ddd" strokeWidth="1.600" />
            <path d="M19 11c0-5 1-8 4-8s4 3 4 8l2 2H17z" fill="#e9a11d" />
          </svg>
        </TaskSlot>
        <TaskSlot $w={50}>
          <svg width="24" height="24" viewBox="0 0 24 24">
            <path d="M2 12C3 4 11 0 17 3c4 2 6 6 5 11H8c1 5 8 5 12 2v5c-6 3-13 2-16-2-2-2-2-5-2-7zm6-1h8c0-4-7-4-8 0z" fill="#0e6fd1" />
          </svg>
        </TaskSlot>
        <TaskSlot $w={48}>
          <svg width="22" height="26" viewBox="0 0 22 26">
            <path d="M1 7h20v19H1z" fill="#fff" />
            <path d="M7 7V4c0-4 8-4 8 0v3" fill="none" stroke="#fff" strokeWidth="1.600" />
            <path d="M7 11h3v3H7zM11 11h3v3h-3zM7 15h3v3H7zM11 15h3v3h-3z" fill="#111" />
          </svg>
        </TaskSlot>
        <TaskSlot $w={49}>
          <svg width="24" height="22" viewBox="0 0 24 22">
            <path d="M1 1h9l2 3h11v17H1z" fill="#f8d56c" />
            <path d="M1 8h22v13H1z" fill="#f4c33f" />
            <path d="M8 12h8v6H8z" fill="#3aa4dd" />
          </svg>
        </TaskSlot>
        <TaskSlot $w={49} $open>
          <SwooshG />
        </TaskSlot>
        <TaskSlot $w={49} $open>
          <SwooshG red />
        </TaskSlot>
        <TaskSlot $w={50} $open>
          <svg width="24" height="28" viewBox="0 0 24 28">
            <circle cx="12" cy="14" r="10.500" fill="#90d030" stroke="#dff0c0" />
            <path d="M6 13h12c-1-6-11-6-12 0zm0 3c2 5 10 5 12 1" fill="none" stroke="#fff" strokeWidth="2" />
            <path d="M14 3c2-2 4-2 6-2" stroke="#3a9a3a" strokeWidth="2" fill="none" />
          </svg>
        </TaskSlot>
        <TaskSlot $w={48} $open $current>
          <AppLogo s={24} />
        </TaskSlot>
        <Tray>
          <TraySlot $w={70}>
            <span>27%</span>
            <span>CPU使用</span>
          </TraySlot>
          <TraySlot $w={28}>
            <svg width="12" height="8" viewBox="0 0 12 8"><path d="M1 7l5-6 5 6" fill="none" stroke="#ddd" strokeWidth="1.200" /></svg>
          </TraySlot>
          <TraySlot $w={24}>
            <svg width="17" height="13" viewBox="0 0 17 13">
              <rect x="3.500" y="2.500" width="13" height="10" fill="none" stroke="#ddd" />
              <rect x="0" y="2" width="9" height="6" fill="#ddd" />
              <path d="M3 0v3M7 0v3" stroke="#ddd" />
            </svg>
          </TraySlot>
          <TraySlot $w={24}>
            <svg width="16" height="14" viewBox="0 0 16 14" fill="none" stroke="#bbb">
              <path d="M1 13a14 14 0 0 1 14-12M4 13a10 10 0 0 1 11-8M7 13a6 6 0 0 1 8-4M10 13a3 3 0 0 1 5-1" />
            </svg>
          </TraySlot>
          <TraySlot $w={24}>
            <svg width="16" height="15" viewBox="0 0 16 15" fill="none" stroke="#ddd">
              <path d="M1 5h3l4-4v13l-4-4H1zM10.500 5a4 4 0 0 1 0 5M12.500 3a7 7 0 0 1 0 9" />
            </svg>
          </TraySlot>
          <TraySlot $w={24}>中</TraySlot>
          <TraySlot $w={32}>
            <svg width="16" height="17" viewBox="0 0 16 17">
              <rect width="15" height="16" rx="3" y="1" transform="rotate(-6 8 8)" fill="#ee5a24" />
              <text x="8" y="14" textAnchor="middle" fontSize="13" fontWeight="700" fontStyle="italic" fill="#fff" fontFamily="Liberation Sans">S</text>
            </svg>
          </TraySlot>
          <TraySlot $w={60}>
            <span>7:43</span>
            <span>2017/8/8</span>
          </TraySlot>
          <NotifySlot>
            <NotifyIcon width="16" height="16" viewBox="0 0 16 16">
              <path d="M0 0h16v13H5l-4 3v-3H0z" fill="#eee" />
              <path d="M3 4h10M3 7h10" stroke="#0a1217" />
            </NotifyIcon>
            <Badge>12</Badge>
          </NotifySlot>
        </Tray>
      </Taskbar>
    </Shell>
  );
}
